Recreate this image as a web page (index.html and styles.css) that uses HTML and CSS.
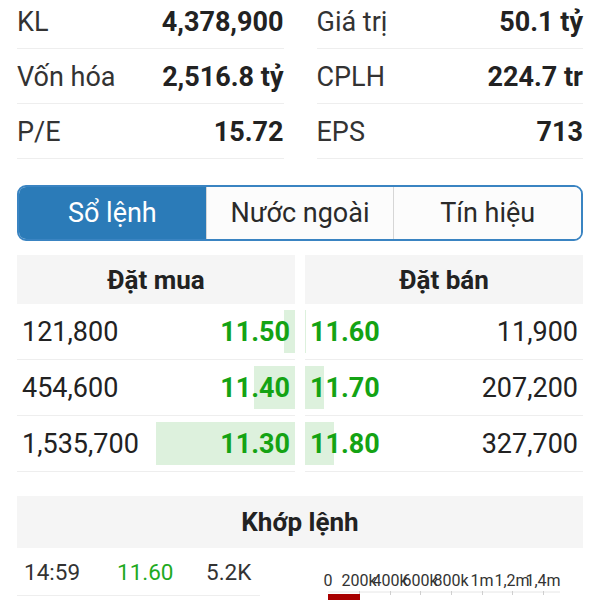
FILE: index.html
```html
<!DOCTYPE html>
<html lang="vi">
<head>
    <meta charset="UTF-8">
    <meta name="viewport" content="width=device-width, initial-scale=1.0">
    <title>Chi tiết mã</title>
    <link rel="stylesheet" href="styles.css">
</head>
<body>

    <div class="page">
        <div class="stats">
            <div class="stat-col">
                <div class="stat-row"><span class="stat-label">KL</span><span class="stat-value">4,378,900</span></div>
                <div class="stat-row"><span class="stat-label">Vốn hóa</span><span class="stat-value">2,516.8 tỷ</span></div>
                <div class="stat-row"><span class="stat-label">P/E</span><span class="stat-value">15.72</span></div>
            </div>
            <div class="stat-col">
                <div class="stat-row"><span class="stat-label">Giá trị</span><span class="stat-value">50.1 tỷ</span></div>
                <div class="stat-row"><span class="stat-label">CPLH</span><span class="stat-value">224.7 tr</span></div>
                <div class="stat-row"><span class="stat-label">EPS</span><span class="stat-value">713</span></div>
            </div>
        </div>

        <div class="tabs">
            <div class="tab active">Sổ lệnh</div>
            <div class="tab">Nước ngoài</div>
            <div class="tab">Tín hiệu</div>
        </div>

        <div class="orderbook">
            <div class="side buy">
                <div class="side-header">Đặt mua</div>
                <div class="ob-row">
                    <div class="ob-cell">
                        <span class="bar" style="width: 11px"></span>
                        <span class="vol">121,800</span><span class="price">11.50</span>
                    </div>
                </div>
                <div class="ob-row">
                    <div class="ob-cell">
                        <span class="bar" style="width: 41px"></span>
                        <span class="vol">454,600</span><span class="price">11.40</span>
                    </div>
                </div>
                <div class="ob-row">
                    <div class="ob-cell">
                        <span class="bar" style="width: 139px"></span>
                        <span class="vol">1,535,700</span><span class="price">11.30</span>
                    </div>
                </div>
            </div>
            <div class="side sell">
                <div class="side-header">Đặt bán</div>
                <div class="ob-row">
                    <div class="ob-cell">
                        <span class="bar" style="width: 1px"></span>
                        <span class="price">11.60</span><span class="vol">11,900</span>
                    </div>
                </div>
                <div class="ob-row">
                    <div class="ob-cell">
                        <span class="bar" style="width: 19px"></span>
                        <span class="price">11.70</span><span class="vol">207,200</span>
                    </div>
                </div>
                <div class="ob-row">
                    <div class="ob-cell">
                        <span class="bar" style="width: 29px"></span>
                        <span class="price">11.80</span><span class="vol">327,700</span>
                    </div>
                </div>
            </div>
        </div>

        <div class="matched">
            <div class="matched-header">Khớp lệnh</div>
            <div class="matched-body">
                <div class="trades">
                    <div class="trade-row">
                        <span class="trade-time">14:59</span>
                        <span class="trade-price">11.60</span>
                        <span class="trade-vol">5.2K</span>
                    </div>
                </div>
                <div class="chart">
                    <svg width="273" height="52" viewBox="0 0 273 52">
                        <g class="axis-labels" text-anchor="middle">
                            <text x="18" y="38">0</text>
                            <text x="49" y="38">200k</text>
                            <text x="80" y="38">400k</text>
                            <text x="110" y="38">600k</text>
                            <text x="141" y="38">800k</text>
                            <text x="172" y="38">1m</text>
                            <text x="202" y="38">1,2m</text>
                            <text x="233" y="38">1,4m</text>
                        </g>
                        <line x1="18" y1="44" x2="250" y2="44" stroke="#e6e6e6" stroke-width="1"/>
                        <g stroke="#cfcfcf" stroke-width="1">
                            <line x1="49.5" y1="43" x2="49.5" y2="47"/>
                            <line x1="80.5" y1="43" x2="80.5" y2="47"/>
                            <line x1="110.5" y1="43" x2="110.5" y2="47"/>
                            <line x1="141.5" y1="43" x2="141.5" y2="47"/>
                            <line x1="172.5" y1="43" x2="172.5" y2="47"/>
                            <line x1="202.5" y1="43" x2="202.5" y2="47"/>
                            <line x1="233.5" y1="43" x2="233.5" y2="47"/>
                        </g>
                        <rect x="18" y="46" width="32" height="8" fill="#a80000"/>
                    </svg>
                </div>
            </div>
        </div>
    </div>

</body>
</html>
```

FILE: styles.css
```css
body {
    font-family: Roboto, "Noto Sans", Arial, sans-serif;
    background-color: #fff;
    color: #333;
    margin: 0;
    padding: 0;
    width: 600px;
    height: 600px;
    overflow: hidden;
}

.page {
    padding: 0 17px;
}

/* stats block */
.stats {
    display: grid;
    grid-template-columns: 1fr 1fr;
    column-gap: 33px;
    margin-top: -6px;
}

.stat-row {
    display: flex;
    justify-content: space-between;
    align-items: center;
    height: 54px;
    padding-top: 2px;
    box-sizing: border-box;
    height: 55px;
    border-bottom: 1px solid #eeeeee;
    font-size: 27px;
}

.stat-label {
    color: #333;
}

.stat-value {
    font-weight: bold;
    color: #222;
}

/* tabs */
.tabs {
    display: flex;
    margin-top: 26px;
    height: 52px;
    border: 2px solid #3a84c2;
    border-radius: 9px;
    overflow: hidden;
}

.tab {
    flex: 1;
    display: flex;
    justify-content: center;
    align-items: center;
    font-size: 27px;
    color: #2a2a2a;
    background-color: #fcfcfc;
    border-left: 1px solid #d6d6d6;
}

.tab:first-child {
    border-left: none;
}

.tab.active {
    background-color: #2b7bb8;
    color: #fff;
}

/* order book */
.orderbook {
    display: flex;
    gap: 10px;
    margin-top: 14px;
}

.side {
    flex: 1;
}

.side-header {
    height: 49px;
    display: flex;
    justify-content: center;
    align-items: center;
    background-color: #f5f5f5;
    font-size: 26px;
    font-weight: bold;
    color: #222;
}

.ob-row {
    padding: 6px 0;
    height: 43px;
    border-bottom: 1px solid #eeeeee;
}

.ob-cell {
    position: relative;
    height: 43px;
    display: flex;
    justify-content: space-between;
    align-items: center;
    padding: 0 5px;
    font-size: 27px;
}

.bar {
    position: absolute;
    top: 0;
    bottom: 0;
    background-color: #ddf1dd;
}

.buy .bar {
    right: 0;
}

.sell .bar {
    left: 0;
}

.vol, .price {
    position: relative;
}

.vol {
    color: #222;
}

.price {
    font-weight: bold;
    color: #14a314;
}

/* matched orders */
.matched {
    margin-top: 24px;
}

.matched-header {
    height: 52px;
    display: flex;
    justify-content: center;
    align-items: center;
    background-color: #f5f5f5;
    font-size: 26px;
    font-weight: bold;
    color: #222;
}

.matched-body {
    display: flex;
    justify-content: space-between;
}

.trades {
    width: 243px;
}

.trade-row {
    display: flex;
    align-items: center;
    height: 47px;
    padding-left: 7px;
    border-bottom: 1px solid #eeeeee;
    font-size: 22.5px;
    color: #333;
}

.trade-time {
    width: 93px;
}

.trade-price {
    width: 89px;
    color: #1faa1f;
}

.chart {
    width: 273px;
}

.chart svg {
    display: block;
}

.axis-labels {
    font-family: Roboto, Arial, sans-serif;
    font-size: 16px;
    fill: #333;
}
```
